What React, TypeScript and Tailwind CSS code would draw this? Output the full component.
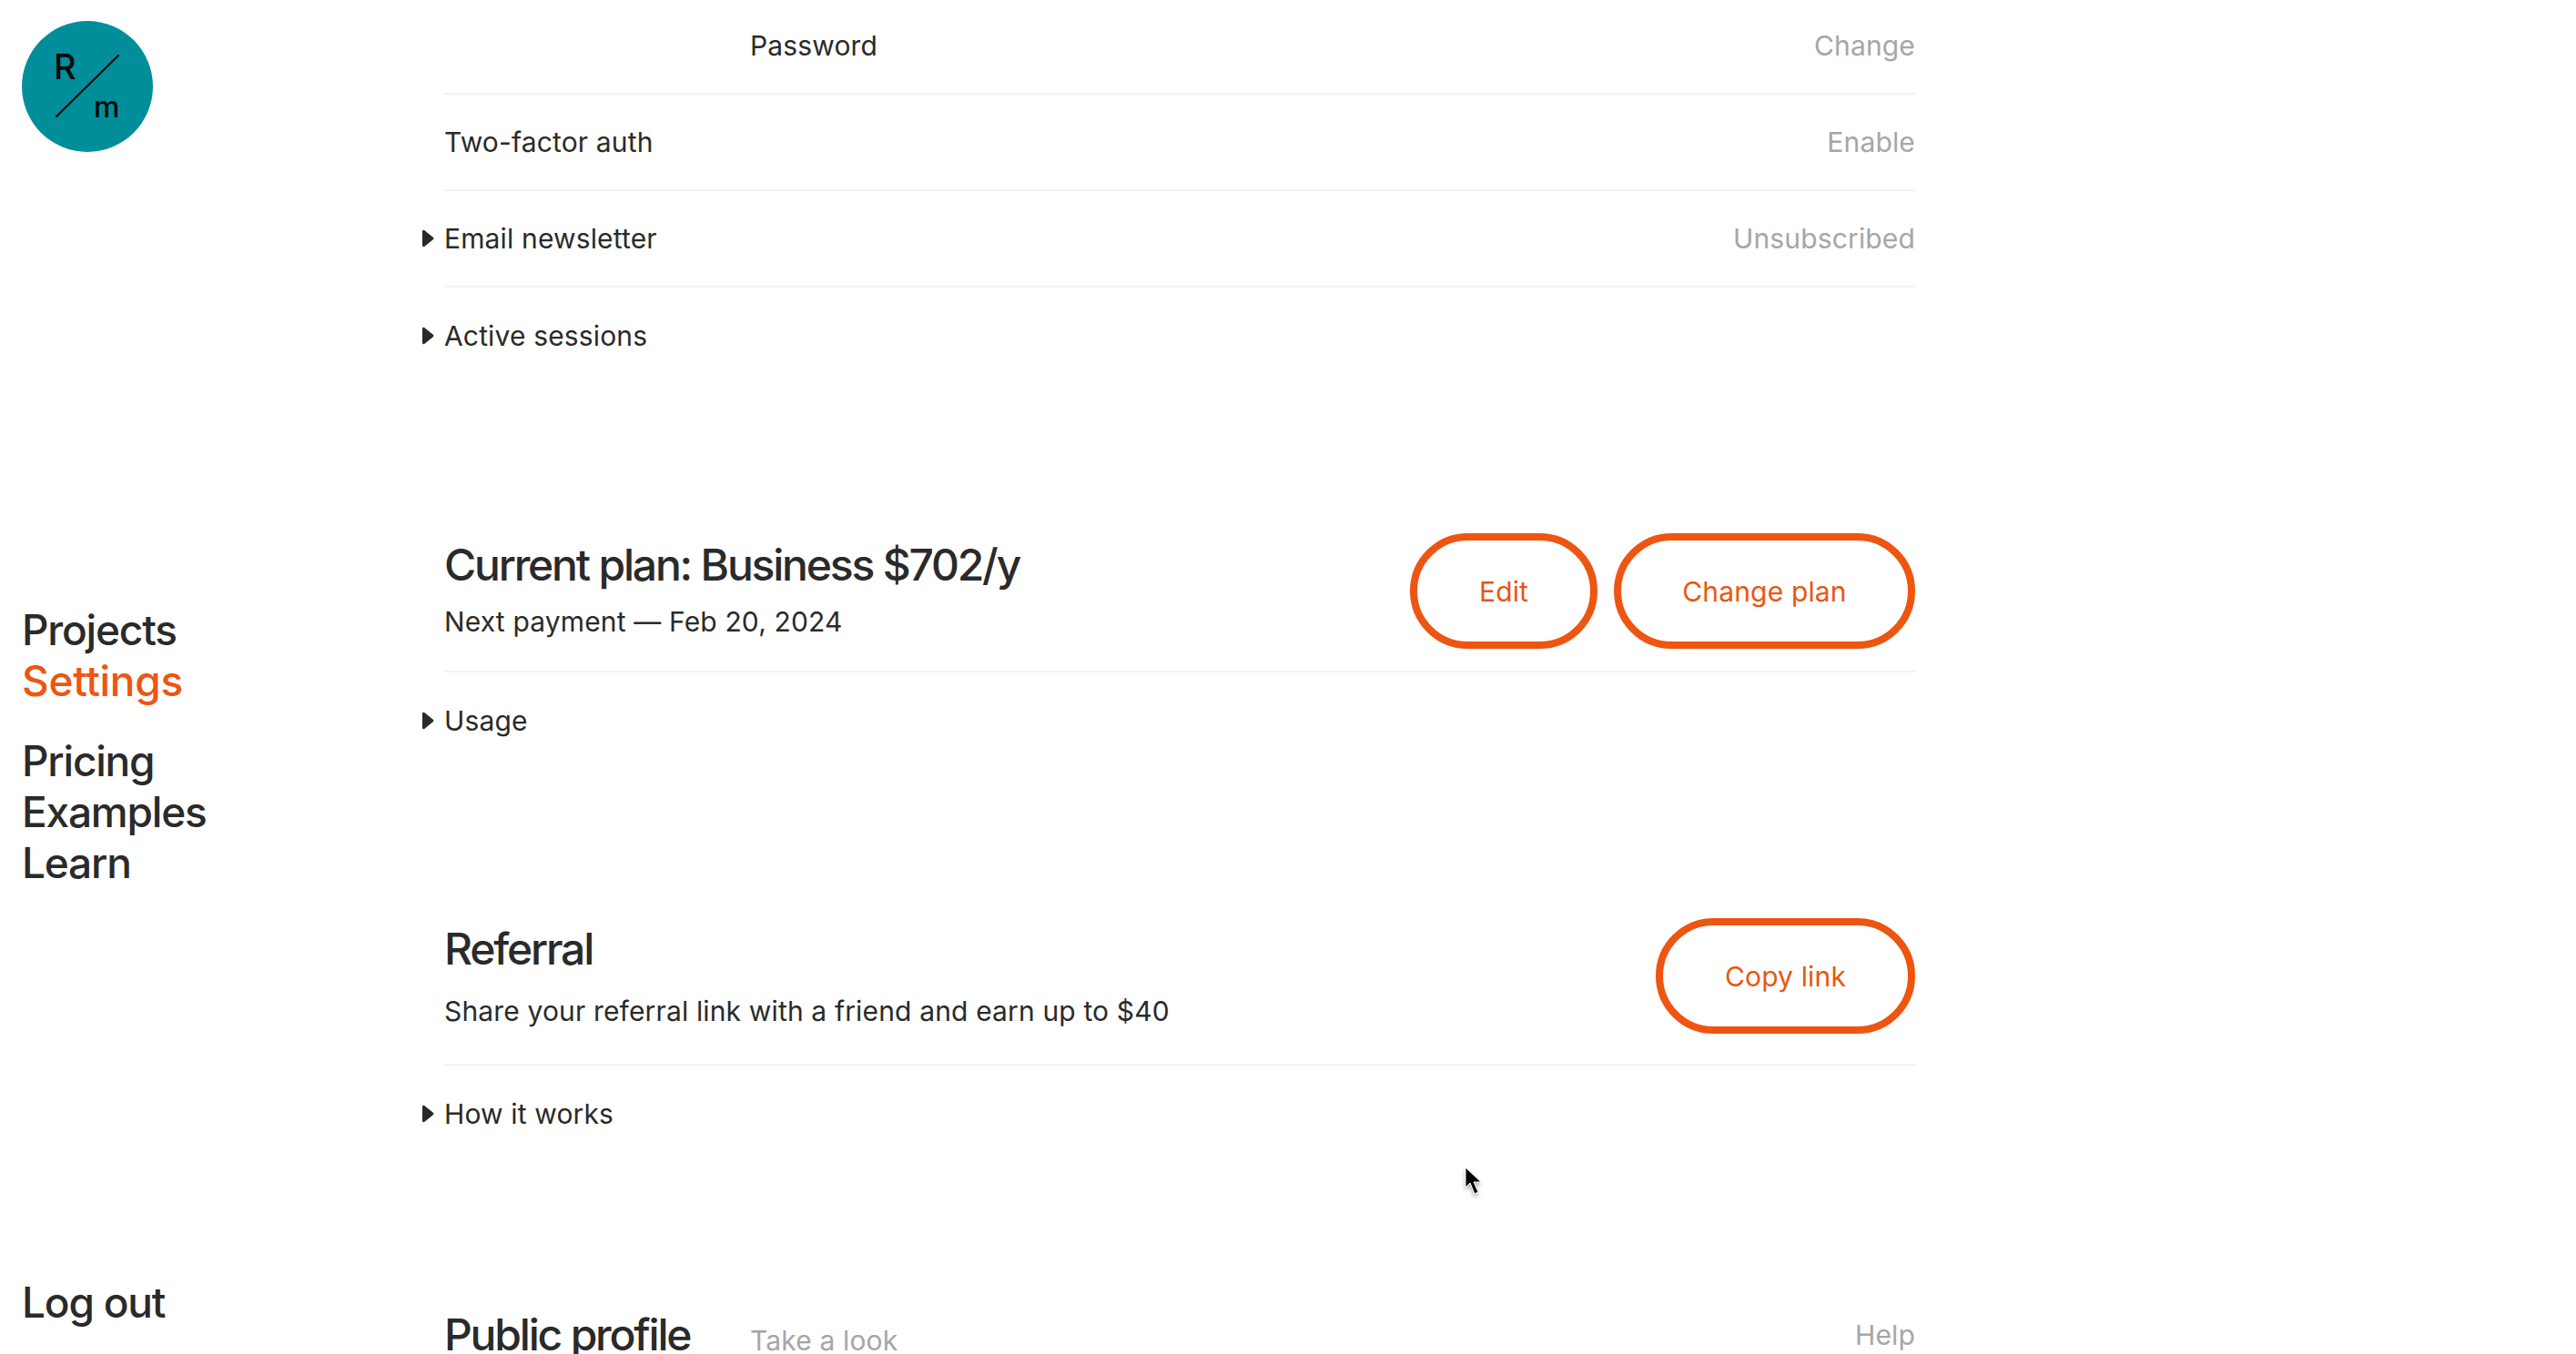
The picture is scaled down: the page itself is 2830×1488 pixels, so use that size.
import type { ReactNode } from 'react';

const ROW_TEXT = 'text-[30px] leading-[40px] tracking-[0.15px] text-[#2a2a2a]';
const MUTED_TEXT = 'text-[30px] leading-[40px] tracking-[0.15px] text-[#a6a6a6]';
const HEADING = 'text-[48px] font-[450] leading-[60px] tracking-[-2.2px] text-[#2a2a2a]';

function Caret() {
  return (
    <svg viewBox="0 0 14 20" className="absolute -left-[25px] top-1/2 h-5 w-3.5 -translate-y-1/2 fill-[#2a2a2a]">
      <path d="M1 2.2c0-1.2 1.2-1.8 2.2-1.1l9.6 7.7c.8.6.8 1.8 0 2.4l-9.6 7.7c-1 .7-2.2.1-2.2-1.1z" />
    </svg>
  );
}

function Disclosure({ label }: { label: string }) {
  return (
    <div className="flex h-[106px] items-center">
      <div className={`relative ${ROW_TEXT}`}>
        <Caret />
        {label}
      </div>
    </div>
  );
}

function Row({ children, action }: { children: ReactNode; action?: string }) {
  return (
    <div className="flex h-[106px] items-center justify-between border-b-2 border-[#f3f3f3]">
      {children}
      {action && <span className={MUTED_TEXT}>{action}</span>}
    </div>
  );
}

function PillButton({ label, width }: { label: string; width: string }) {
  return (
    <button className={`h-[127px] ${width} rounded-full border-[8px] border-[#ee5510] text-[30px] leading-[40px] tracking-[0.15px] text-[#e9560f]`}>
      {label}
    </button>
  );
}

function Logo() {
  return (
    <svg viewBox="0 0 144 144" className="h-36 w-36 shrink-0">
      <circle cx="72" cy="72" r="72" fill="#008f9a" />
      <text x="35" y="64" fontFamily="Inter, sans-serif" fontSize="38" fontWeight="500" fill="#0a0a0a">R</text>
      <text x="79" y="106" fontFamily="Inter, sans-serif" fontSize="32" fontWeight="500" fill="#0a0a0a">m</text>
      <path d="M38 105 106 38" stroke="#0a0a0a" strokeWidth="2.2" strokeLinecap="round" />
    </svg>
  );
}

export default function App() {
  return (
    <div className="relative flex h-[1488px] w-[2830px] overflow-hidden bg-white font-['Inter',sans-serif]">
      {/* Sidebar */}
      <aside className="flex w-[488px] shrink-0 flex-col pb-[29px] pl-6 pt-[23px] text-[46px] font-[450] leading-[56px] tracking-[-1.2px] text-[#2a2a2a]">
        <Logo />
        <nav className="mt-[497px] flex flex-col">
          <a>Projects</a>
          <a className="tracking-[-0.3px] text-[#ee5510]">Settings</a>
          <a className="mt-8">Pricing</a>
          <a>Examples</a>
          <a>Learn</a>
        </nav>
        <a className="mt-auto">Log out</a>
      </aside>

      {/* Settings list, scrolled part way */}
      <main className="-mt-0.5 w-[1616px] shrink-0">
        <Row action="Change">
          <span className={`ml-[336px] ${ROW_TEXT}`}>Password</span>
        </Row>
        <Row action="Enable">
          <span className={ROW_TEXT}>Two-factor auth</span>
        </Row>
        <Row action="Unsubscribed">
          <span className={`relative ${ROW_TEXT}`}>
            <Caret />
            Email newsletter
          </span>
        </Row>
        <Disclosure label="Active sessions" />

        <section className="mt-[164px] flex h-[153px] items-center justify-between border-b-2 border-[#f3f3f3] pb-6">
          <div className="mb-[5px]">
            <h2 className={HEADING}>Current plan: Business $702/y</h2>
            <p className={`mt-3 ${ROW_TEXT}`}>Next payment — Feb 20, 2024</p>
          </div>
          <div className="flex gap-[18px]">
            <PillButton label="Edit" width="w-[206px]" />
            <PillButton label="Change plan" width="w-[331px]" />
          </div>
        </section>
        <Disclosure label="Usage" />

        <section className="mt-[164px] flex h-[162px] items-center justify-between border-b-2 border-[#f3f3f3] pb-[33px]">
          <div className="mb-0.5">
            <h2 className={HEADING}>Referral</h2>
            <p className={`mt-[18px] ${ROW_TEXT}`}>Share your referral link with a friend and earn up to $40</p>
          </div>
          <PillButton label="Copy link" width="w-[285px]" />
        </section>
        <Disclosure label="How it works" />

        <section className="mt-40 flex items-center justify-between">
          <div className="flex items-baseline">
            <h2 className={`w-[336px] ${HEADING}`}>Public profile</h2>
            <span className={MUTED_TEXT}>Take a look</span>
          </div>
          <span className={MUTED_TEXT}>Help</span>
        </section>
      </main>

      {/* Mouse pointer */}
      <svg viewBox="0 0 20 34" className="absolute left-[1608px] top-[1282px] h-[34px] w-5 drop-shadow-[0_3px_2px_rgba(0,0,0,0.3)]">
        <path d="M2 1v22l5-5 5 12 4-2-5-11h8z" fill="#000" stroke="#fff" strokeWidth="1" />
      </svg>
    </div>
  );
}
